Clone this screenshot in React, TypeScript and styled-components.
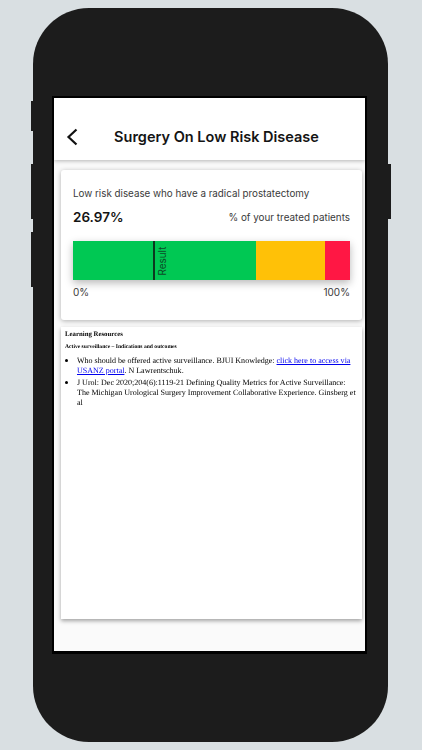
import { createGlobalStyle } from "styled-components";
import styled from "styled-components";

const GlobalStyle = createGlobalStyle`
    html, body {
        margin: 0;
        height: 100%;
        background: #d9dfe2;
        overflow: hidden;
    }
`;

const segments = [
    { color: "#00c853", grow: 183 },
    { color: "#ffc107", grow: 69 },
    { color: "#ff1744", grow: 25 },
];

function BackIcon() {
    return (
        <svg width="12" height="18" viewBox="0 0 12 18" fill="none">
            <path d="M10.5 1.5 L2.5 9 L10.5 16.5" stroke="#111" strokeWidth="2.2" />
        </svg>
    );
}

export default function App() {
    return (
        <>
            <GlobalStyle />
            <Stage>
                <Phone>
                    <SideButton $side="left" $top={93} $height={30} />
                    <SideButton $side="left" $top={156} $height={55} />
                    <SideButton $side="left" $top={224} $height={55} />
                    <SideButton $side="right" $top={156} $height={55} />
                    <Screen>
                        <AppBar>
                            <BackSlot>
                                <BackIcon />
                            </BackSlot>
                            <Title>Surgery On Low Risk Disease</Title>
                        </AppBar>
                        <Content>
                            <ScoreCard>
                                <Description>Low risk disease who have a radical prostatectomy</Description>
                                <ScoreRow>
                                    <Score>26.97%</Score>
                                    <ScoreNote>% of your treated patients</ScoreNote>
                                </ScoreRow>
                                <Bar>
                                    {segments.map(segment => (
                                        <Segment key={segment.color} $color={segment.color} $grow={segment.grow} />
                                    ))}
                                    <Marker>
                                        <MarkerLabel>Result</MarkerLabel>
                                    </Marker>
                                </Bar>
                                <Scale>
                                    <span>0%</span>
                                    <span>100%</span>
                                </Scale>
                            </ScoreCard>
                            <ResourcesCard>
                                <ResourcesText>
                                    <ResourcesHeading>Learning Resources</ResourcesHeading>
                                    <ResourcesSubheading>Active surveillance – Indications and outcomes</ResourcesSubheading>
                                    <ResourcesList>
                                        <li>
                                            Who should be offered active surveillance. BJUI Knowledge:{" "}
                                            <a href="#usanz">click here to access via USANZ portal</a>. N Lawrentschuk.
                                        </li>
                                        <li>
                                            J Urol: Dec 2020;204(6):1119-21 Defining Quality Metrics for Active Surveillance:
                                            The Michigan Urological Surgery Improvement Collaborative Experience. Ginsberg et al
                                        </li>
                                    </ResourcesList>
                                </ResourcesText>
                            </ResourcesCard>
                        </Content>
                    </Screen>
                </Phone>
            </Stage>
        </>
    );
}

const Stage = styled.div`
    width: 422px;
    height: 750px;
    padding: 8px 34px 8px 33px;
    box-sizing: border-box;
`;

const Phone = styled.div`
    position: relative;
    height: 100%;
    padding: 88px 21px 88px 19px;
    box-sizing: border-box;
    background: #1c1c1c;
    border-radius: 56px;
`;

const SideButton = styled.div<{ $side: "left" | "right"; $top: number; $height: number }>`
    position: absolute;
    top: ${p => p.$top}px;
    ${p => p.$side}: -2.5px;
    width: 2.5px;
    height: ${p => p.$height}px;
    background: #1c1c1c;
`;

const Screen = styled.div`
    height: 100%;
    display: flex;
    flex-direction: column;
    box-sizing: border-box;
    background: #fafafa;
    border: 2.5px solid #000;
    border-bottom-width: 3px;
    overflow: hidden;
`;

const AppBar = styled.header`
    flex: 0 0 62px;
    position: relative;
    z-index: 1;
    display: flex;
    align-items: flex-end;
    justify-content: center;
    padding: 0 0 13px 14px;
    box-sizing: border-box;
    background: #fff;
    box-shadow: 0 1px 4px rgba(0, 0, 0, 0.28);
`;

const BackSlot = styled.div`
    position: absolute;
    left: 12px;
    bottom: 14px;
    display: flex;
`;

const Title = styled.h1`
    margin: 0;
    font: 600 14.5px/20px Inter, "Liberation Sans", sans-serif;
    color: #141414;
`;

const Content = styled.main`
    flex: 1;
    display: flex;
    flex-direction: column;
    gap: 7px;
    padding: 10px 3px 32px 7px;
`;

const ScoreCard = styled.section`
    flex: 0 0 150px;
    box-sizing: border-box;
    padding: 17px 12px 0;
    background: #fff;
    border-radius: 3px;
    box-shadow: 0 1px 5px rgba(0, 0, 0, 0.3);
    font-family: Inter, "Liberation Sans", sans-serif;
`;

const Description = styled.div`
    font-size: 9.8px;
    line-height: 14px;
    color: #3a3a3a;
`;

const ScoreRow = styled.div`
    display: flex;
    align-items: center;
    justify-content: space-between;
    margin-top: 6px;
    height: 20px;
`;

const Score = styled.div`
    font-size: 13.5px;
    font-weight: 600;
    color: #141414;
`;

const ScoreNote = styled.div`
    font-size: 9.9px;
    color: #3a3a3a;
`;

const Bar = styled.div`
    position: relative;
    display: flex;
    height: 39px;
    margin-top: 14px;
    box-shadow: 0 3px 8px rgba(0, 0, 0, 0.28);
`;

const Segment = styled.div<{ $color: string; $grow: number }>`
    flex: ${p => p.$grow} 0 0;
    background: ${p => p.$color};
`;

const Marker = styled.div`
    position: absolute;
    top: 0;
    bottom: 0;
    left: 80px;
    width: 2px;
    background: #0c3a20;
`;

const MarkerLabel = styled.span`
    position: absolute;
    left: 3px;
    top: 50%;
    transform: translateY(-50%) rotate(180deg);
    writing-mode: vertical-rl;
    font-size: 9.9px;
    line-height: 12px;
    color: #0d4a28;
`;

const Scale = styled.div`
    display: flex;
    justify-content: space-between;
    margin-top: 5px;
    font-size: 10px;
    line-height: 14px;
    color: #3a3a3a;
`;

const ResourcesCard = styled.section`
    flex: 1;
    box-sizing: border-box;
    padding: 3px 4px 0;
    background: #fff;
    box-shadow: 0 2px 4px rgba(0, 0, 0, 0.35);
`;

const ResourcesText = styled.div`
    will-change: transform;
    font-family: "Liberation Serif", "Times New Roman", serif;
    color: #000;
    text-rendering: geometricPrecision;
`;

const ResourcesHeading = styled.div`
    font-size: 6.8px;
    font-weight: 700;
    line-height: 10px;
`;

const ResourcesSubheading = styled.div`
    margin-top: 3px;
    font-size: 5.6px;
    font-weight: 700;
    line-height: 8px;
`;

const ResourcesList = styled.ul`
    margin: 4.5px 0 0;
    padding-left: 12px;
    font-size: 8.03px;
    line-height: 10px;

    li + li {
        margin-top: 2px;
    }

    li::marker {
        font-size: 10px;
    }

    a {
        color: #0000ee;
    }
`;
